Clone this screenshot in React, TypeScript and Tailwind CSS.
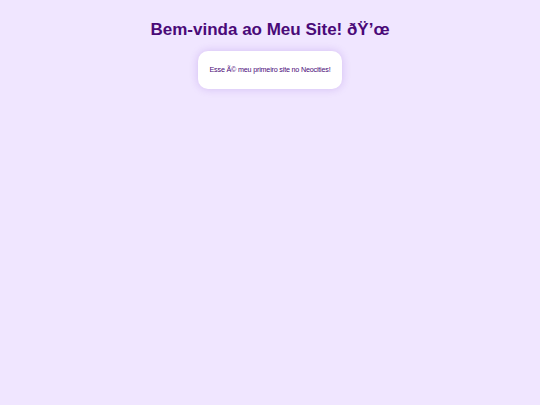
export default function App() {
  return (
    <div className="min-h-[405px] bg-[#f0e6ff] pt-[20px] text-center font-['Liberation_Sans',Arial,sans-serif] text-[#4a0a78]">
      <h1 className="text-[17px] font-bold leading-[20px]">
        Bem-vinda ao Meu Site! {"\u00F0\u0178\u2019\u0153"}
      </h1>
      <div className="mx-auto mt-[11px] inline-block rounded-[10px] bg-white px-[12px] py-[14px] text-[7.2px] leading-[10px] tracking-[-0.2px] text-[#4a0a78] shadow-[0_0_9px_rgba(110,40,200,0.22)]">
        Esse {"\u00C3\u00A9"} meu primeiro site no Neocities!
      </div>
    </div>
  );
}
